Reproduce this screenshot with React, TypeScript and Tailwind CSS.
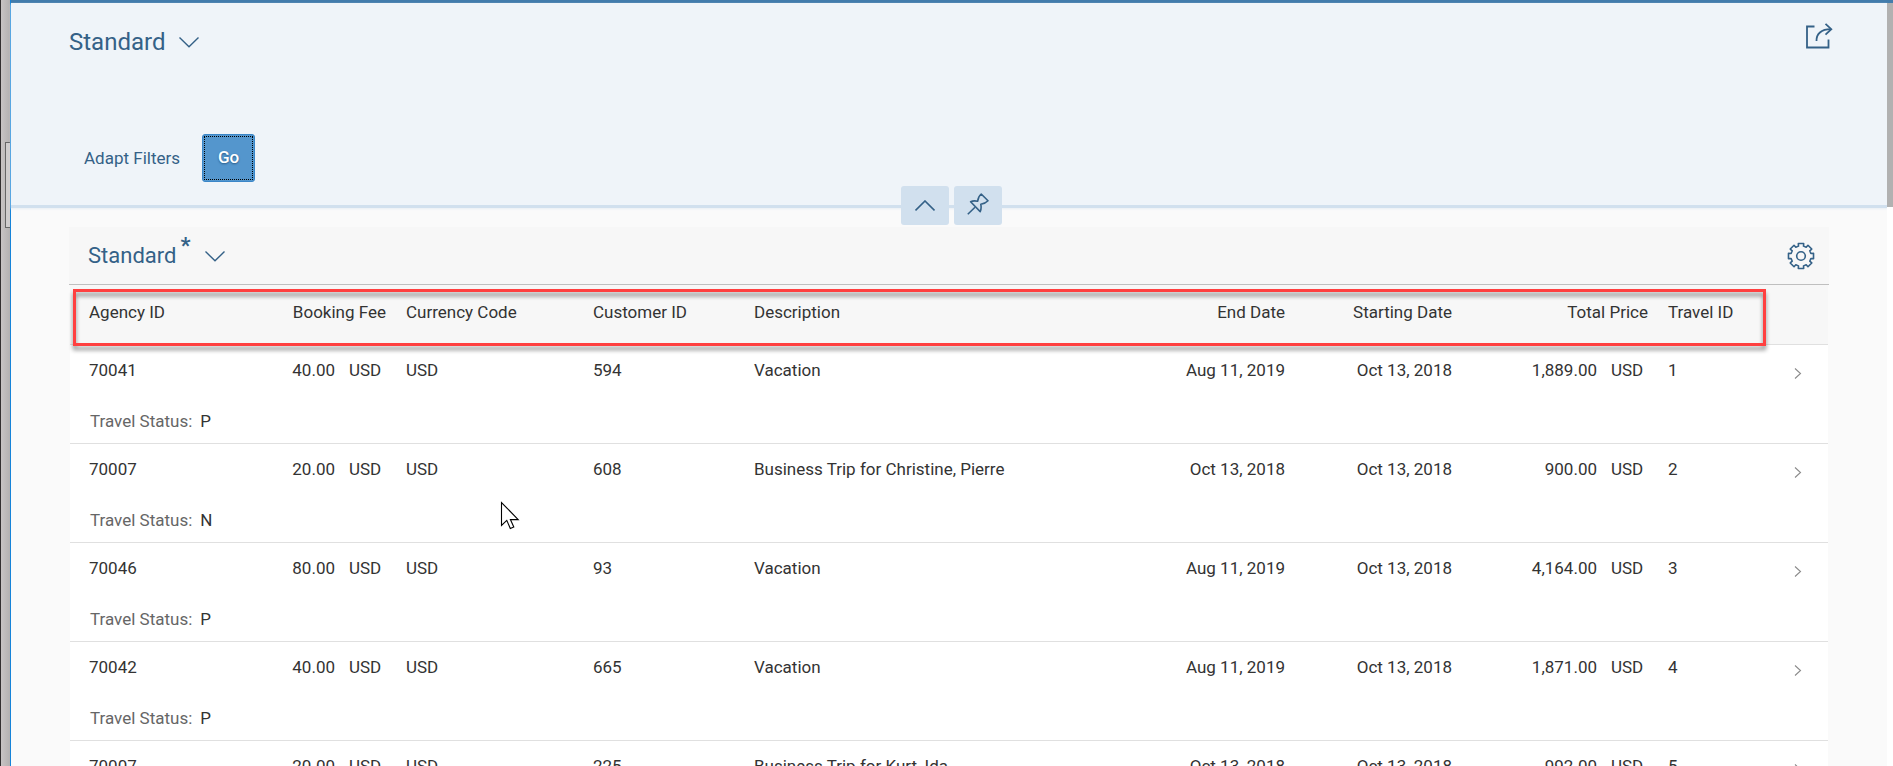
import React from "react";

type Travel = {
  agency: string;
  fee: string;
  customer: string;
  description: string;
  end: string;
  start: string;
  total: string;
  id: string;
  status: string;
};

const travels: Travel[] = [
  { agency: "70041", fee: "40.00", customer: "594", description: "Vacation", end: "Aug 11, 2019", start: "Oct 13, 2018", total: "1,889.00", id: "1", status: "P" },
  { agency: "70007", fee: "20.00", customer: "608", description: "Business Trip for Christine, Pierre", end: "Oct 13, 2018", start: "Oct 13, 2018", total: "900.00", id: "2", status: "N" },
  { agency: "70046", fee: "80.00", customer: "93", description: "Vacation", end: "Aug 11, 2019", start: "Oct 13, 2018", total: "4,164.00", id: "3", status: "P" },
  { agency: "70042", fee: "40.00", customer: "665", description: "Vacation", end: "Aug 11, 2019", start: "Oct 13, 2018", total: "1,871.00", id: "4", status: "P" },
  { agency: "70007", fee: "20.00", customer: "225", description: "Business Trip for Kurt, Ida", end: "Oct 13, 2018", start: "Oct 13, 2018", total: "992.00", id: "5", status: "P" },
];

function ChevronDown() {
  return (
    <svg width="20" height="11" viewBox="0 0 20 11" fill="none" stroke="currentColor" strokeWidth="1.4" aria-hidden="true">
      <path d="M0.5 0.6 L10 9.8 L19.5 0.6" />
    </svg>
  );
}

function ShareIcon() {
  return (
    <svg width="28" height="27" viewBox="0 0 28 27" fill="none" stroke="currentColor" strokeWidth="1.8" aria-hidden="true">
      <path d="M9.5 3.5 H2 V24.5 H23.5 V16.5" />
      <path d="M11.5 18 C11.3 11 16 6.2 26 6.2" />
      <path d="M20.5 0.8 L26.3 6.2 L20.5 11.6" />
    </svg>
  );
}

function GearIcon() {
  const points: string[] = [];
  const teeth = 8;
  for (let i = 0; i < teeth; i++) {
    const mid = (i * 2 * Math.PI) / teeth;
    const corners: [number, number][] = [
      [-0.25, 10.2],
      [-0.21, 12.8],
      [0.21, 12.8],
      [0.25, 10.2],
    ];
    for (const [offset, radius] of corners) {
      const x = 14 + radius * Math.sin(mid + offset);
      const y = 14 - radius * Math.cos(mid + offset);
      points.push(`${x.toFixed(2)},${y.toFixed(2)}`);
    }
  }
  return (
    <svg width="28" height="28" viewBox="0 0 28 28" fill="none" stroke="currentColor" strokeWidth="1.6" strokeLinejoin="round" aria-hidden="true">
      <polygon points={points.join(" ")} />
      <circle cx="14" cy="14" r="4.3" />
    </svg>
  );
}

function PinIcon() {
  return (
    <svg width="22" height="22" viewBox="0 0 22 22" fill="none" stroke="currentColor" strokeWidth="1.6" strokeLinejoin="round" aria-hidden="true">
      <path d="M0.8 21.2 L8 14.2" />
      <path d="M3.6 8.8 C5.5 7.8 8.8 7.8 10.6 8.3 C10.9 6 12.2 2.6 14.2 1 L21 7.8 C19.3 9.6 16.2 11 13.8 11.3 C14.2 13.2 14.2 16.4 13.2 18.6 Z" />
    </svg>
  );
}

function Money({ amount }: { amount: string }) {
  return (
    <span className="inline-flex">
      <span>{amount}</span>
      <span className="w-[61px] pl-3.5 text-left">USD</span>
    </span>
  );
}

const th = "px-2.5 pt-[15px] align-top font-normal leading-6";
const td = "px-2.5 pt-[13px] align-top leading-6";

function TravelRows({ travel }: { travel: Travel }) {
  return (
    <>
      <tr className="h-[52px]">
        <td className="pt-[13px] pl-[19px] align-top leading-6">{travel.agency}</td>
        <td className="pt-[13px] text-right align-top leading-6">
          <Money amount={travel.fee} />
        </td>
        <td className={td}>USD</td>
        <td className={td}>{travel.customer}</td>
        <td className={td}>{travel.description}</td>
        <td className={`${td} text-right`}>{travel.end}</td>
        <td className={`${td} text-right`}>{travel.start}</td>
        <td className="pt-[13px] text-right align-top leading-6">
          <Money amount={travel.total} />
        </td>
        <td className={td}>{travel.id}</td>
        <td className="pt-[23px] pl-[35px] align-top">
          <a href="#travel" aria-label={`Open travel ${travel.id}`} className="block w-2 text-[#8a8a8a]">
            <svg width="8" height="11" viewBox="0 0 8 11" fill="none" stroke="currentColor" strokeWidth="1.1" aria-hidden="true">
              <path d="M1 0.5 L6.5 5.5 L1 10.5" />
            </svg>
          </a>
        </td>
      </tr>
      <tr className="h-[47px] border-b border-[#e0e0e0]">
        <td colSpan={10} className="pt-[13px] pl-5 align-top leading-6">
          <span className="mr-2 text-[#666666]">Travel Status:</span>
          <span>{travel.status}</span>
        </td>
      </tr>
    </>
  );
}

export default function App() {
  return (
    <div className="relative flex h-screen overflow-hidden bg-[#fafafa] font-[Roboto,sans-serif] text-[17px] text-[#333333]">
      <div className="flex w-[11px] shrink-0 flex-col border-r border-l border-r-[#1683d8] border-l-[#333031] bg-linear-to-r from-[#c8c4c4] to-[#b4b1b1] pt-[142px]">
        <div className="ml-1 h-[86px] border border-r-0 border-[#666666] bg-[#d0cdcd]" />
      </div>

      <div className="flex min-w-0 flex-1 flex-col border-t-[3px] border-[#427cac]">
        <div className="flex min-h-0 flex-1">
          <main className="min-w-0 flex-1">
            <header className="h-[205px] border-b-[3px] border-[#d1e0ee] bg-[#eff4f9] text-[#346187] shadow-[0_1px_2px_#e8eef4]">
              <div className="flex items-start justify-between pt-4 pr-[54px] pl-[58px]">
                <button type="button" className="flex items-center gap-3.5 pt-[7px] text-2xl leading-8">
                  Standard
                  <ChevronDown />
                </button>
                <button type="button" aria-label="Share" className="pt-1">
                  <ShareIcon />
                </button>
              </div>
              <div className="flex items-center gap-[22px] pt-[76px] pl-[73px]">
                <button type="button" className="leading-6">
                  Adapt Filters
                </button>
                <button type="button" className="h-12 w-[53px] rounded-[3px] border border-[#3a86c8] bg-[#5496cd] p-px font-medium text-white">
                  <span className="flex h-full items-center justify-center border border-dotted border-black [text-shadow:0_1px_2px_#2a5a86]">Go</span>
                </button>
              </div>
            </header>

            <section className="mt-[19px] mr-[58px] ml-[58px]">
              <div className="flex h-[58px] items-center justify-between border-b border-[#bfbfbf] bg-[#f7f7f7] pr-3.5 pl-[19px] text-[#346187]">
                <button type="button" className="flex items-center pt-px text-[22px] leading-8">
                  Standard
                  <span className="w-[29px] pb-5 pl-1 text-left font-bold leading-5">*</span>
                  <ChevronDown />
                </button>
                <button type="button" aria-label="Settings">
                  <GearIcon />
                </button>
              </div>

              <div className="relative mx-px">
                <table className="w-full table-fixed border-collapse bg-white text-left">
                  <colgroup>
                    <col className="w-[160px]" />
                    <col className="w-[166px]" />
                    <col className="w-[187px]" />
                    <col className="w-[161px]" />
                    <col />
                    <col className="w-[166px]" />
                    <col className="w-[167px]" />
                    <col className="w-[196px]" />
                    <col className="w-[101px]" />
                    <col className="w-[69px]" />
                  </colgroup>
                  <thead>
                    <tr className="h-[59px] border-b border-[#e0e0e0] bg-[#f7f7f7]">
                      <th className="pt-[15px] pl-[19px] align-top font-normal leading-6">Agency ID</th>
                      <th className={`${th} text-right`}>Booking Fee</th>
                      <th className={th}>Currency Code</th>
                      <th className={th}>Customer ID</th>
                      <th className={th}>Description</th>
                      <th className={`${th} text-right`}>End Date</th>
                      <th className={`${th} text-right`}>Starting Date</th>
                      <th className={`${th} text-right`}>Total Price</th>
                      <th className={th}>Travel ID</th>
                      <th aria-label="Navigation" />
                    </tr>
                  </thead>
                  <tbody>
                    {travels.map((travel) => (
                      <TravelRows key={travel.id} travel={travel} />
                    ))}
                  </tbody>
                </table>
                <div className="pointer-events-none absolute top-1 right-[62px] left-[3px] h-[57px] border-[3px] border-[#ff4040] drop-shadow-[0_4px_2px_rgba(0,0,0,0.45)]" />
              </div>
            </section>
          </main>
          <div className="w-1.5 shrink-0 bg-white">
            <div className="h-[204px] bg-[#b1b1b1]" />
          </div>
        </div>
      </div>

      <div className="absolute top-[186px] right-0 left-[9px] flex justify-center gap-[5px] text-[#346187]">
        <button type="button" aria-label="Collapse header" className="flex h-[39px] w-12 items-center justify-center rounded-[3px] bg-[#d1e0ee]">
          <svg width="20" height="11" viewBox="0 0 20 11" fill="none" stroke="currentColor" strokeWidth="1.6" aria-hidden="true">
            <path d="M0.5 10.4 L10 1 L19.5 10.4" />
          </svg>
        </button>
        <button type="button" aria-label="Pin header" className="flex h-[39px] w-12 items-center justify-center rounded-[3px] bg-[#d1e0ee] pb-1">
          <PinIcon />
        </button>
      </div>

      <svg className="pointer-events-none absolute top-[501px] left-[500px]" width="20" height="30" viewBox="0 0 20 30" fill="white" stroke="black" strokeWidth="1.1" aria-hidden="true">
        <path d="M1.5 1.5 V24.5 L6.8 19.4 L10.3 27.5 L13.8 26 L10.4 18.6 H18.2 Z" />
      </svg>
    </div>
  );
}
